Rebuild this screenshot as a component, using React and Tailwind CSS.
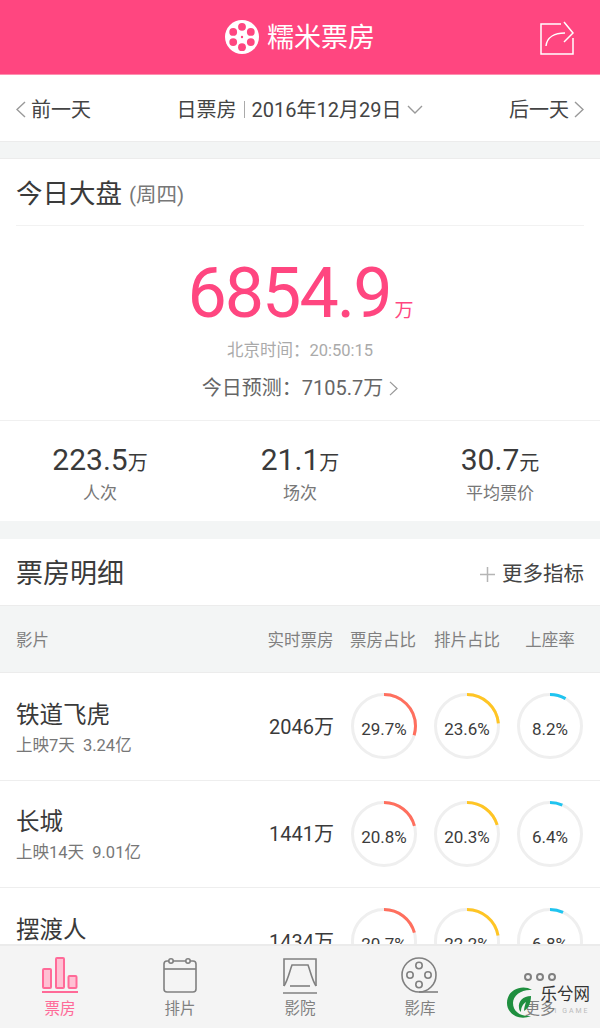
const FONT = "[font-family:Roboto,'Noto_Sans_CJK_SC',sans-serif]";

const movies = [
  { name: "铁道飞虎", sub: "上映7天  3.24亿", total: "2046万", rates: [29.7, 23.6, 8.2] },
  { name: "长城", sub: "上映14天  9.01亿", total: "1441万", rates: [20.8, 20.3, 6.4] },
  { name: "摆渡人", sub: "", total: "1434万", rates: [20.7, 22.2, 6.8] },
];

const ringColors = ["#ff6f5e", "#ffc524", "#1fc4f0"];

const Ring = ({ value, color }) => {
  const r = 31.5;
  const c = 2 * Math.PI * r;
  return (
    <div className="relative w-[66px] h-[66px] shrink-0">
      <svg width="66" height="66" viewBox="0 0 66 66" className="-rotate-90">
        <circle cx="33" cy="33" r={r} fill="none" stroke="#efefef" strokeWidth="3" />
        <circle
          cx="33"
          cy="33"
          r={r}
          fill="none"
          stroke={color}
          strokeWidth="3"
          strokeDasharray={`${(c * value) / 100} ${c}`}
        />
      </svg>
      <div className="absolute inset-0 flex items-center justify-center pt-[7px] text-[17px] text-[#3c3c3c]">
        {value}%
      </div>
    </div>
  );
};

const Chevron = ({ dir = "right", size = 10, height = 17, color = "#999" }) => (
  <svg width={size} height={height} viewBox="0 0 10 17" fill="none" stroke={color} strokeWidth="1.4">
    <path d={dir === "right" ? "M1 1l8 7.5L1 16" : "M9 1L1 8.5 9 16"} />
  </svg>
);

const Stat = ({ value, unit, label }) => (
  <div className="flex flex-col items-center">
    <div className="flex items-baseline text-[#3a3a3a] leading-none">
      <span className="text-[30px]">{value}</span>
      <span className="text-[20px]">{unit}</span>
    </div>
    <div className="mt-[10px] text-[17px] leading-none text-[#777]">{label}</div>
  </div>
);

const Reel = ({ className, hole = "#ff4680" }) => (
  <svg viewBox="0 0 34 34" className={className}>
    <circle cx="17" cy="17" r="17" fill="#fff" />
    <circle cx="17" cy="6.8" r="3.9" fill={hole} />
    <circle cx="17" cy="27.2" r="3.9" fill={hole} />
    <circle cx="8.2" cy="11.9" r="3.9" fill={hole} />
    <circle cx="25.8" cy="11.9" r="3.9" fill={hole} />
    <circle cx="8.2" cy="22.1" r="3.9" fill={hole} />
    <circle cx="25.8" cy="22.1" r="3.9" fill={hole} />
    <circle cx="17" cy="17" r="1.2" fill={hole} />
  </svg>
);

const tabs = [
  {
    label: "票房",
    active: true,
    icon: (
      <svg width="38" height="38" viewBox="0 0 38 38" fill="#ffc0d3" stroke="#ff6a98" strokeWidth="2">
        <rect x="2" y="13" width="8" height="19" rx="1" />
        <rect x="15" y="2" width="8" height="30" rx="1" />
        <rect x="27.5" y="20" width="8" height="12" rx="1" />
        <path d="M1 36h36" fill="none" />
      </svg>
    ),
  },
  {
    label: "排片",
    icon: (
      <svg width="36" height="38" viewBox="0 0 36 38" fill="none" stroke="#808080" strokeWidth="1.6">
        <rect x="2" y="5" width="32" height="31" rx="3" />
        <path d="M2 13h32" />
        <circle cx="9" cy="5" r="2.2" fill="#f4f4f4" />
        <circle cx="26" cy="5" r="2.2" fill="#f4f4f4" />
      </svg>
    ),
  },
  {
    label: "影院",
    icon: (
      <svg width="36" height="38" viewBox="0 0 36 38" fill="none" stroke="#808080" strokeWidth="1.6">
        <path d="M2 30V3h32v27" />
        <path d="M2 30C6 24 8 14 10 9h16c2 5 4 15 8 21" />
        <path d="M8 30h20" />
        <path d="M1 37h34" />
      </svg>
    ),
  },
  {
    label: "影库",
    icon: (
      <svg width="38" height="38" viewBox="0 0 38 38" fill="none" stroke="#808080" strokeWidth="1.6">
        <circle cx="18" cy="19" r="17" />
        <circle cx="18" cy="9.5" r="3.2" />
        <circle cx="18" cy="28.5" r="3.2" />
        <circle cx="9" cy="19" r="3.2" />
        <circle cx="27" cy="19" r="3.2" />
        <path d="M18 36h19" />
      </svg>
    ),
  },
  {
    label: "更多",
    icon: (
      <svg width="34" height="38" viewBox="0 0 34 38" fill="none" stroke="#808080" strokeWidth="2">
        <circle cx="5" cy="21" r="3" />
        <circle cx="17" cy="21" r="3" />
        <circle cx="29" cy="21" r="3" />
      </svg>
    ),
  },
];

const App = () => {
  return (
    <div className={`relative flex flex-col w-[600px] h-[1028px] overflow-hidden bg-[#f3f5f5] ${FONT}`}>
      {/* Header */}
      <header className="relative shrink-0 h-[75px] flex items-center justify-center bg-[#ff4680] border-b border-[#ff8fb0]">
        <Reel className="w-[34px] h-[34px] mr-[8px]" />
        <span className="pt-[3px] text-[27px] text-white">糯米票房</span>
        <svg width="36" height="36" viewBox="0 0 36 36" fill="none" stroke="#fff" strokeWidth="1.5" className="absolute right-[25px] top-[19px]">
          <path d="M22 5H2v30h32V19" />
          <path d="M7 27c1-9 9-13 19-13" />
          <path d="M25 3l9 11-9 9" />
        </svg>
      </header>

      <div className="flex-1 min-h-0 overflow-hidden">
        {/* Date bar */}
        <div className="flex items-center justify-between h-[67px] pt-[3px] px-[16px] bg-white border-b border-[#ececec] text-[20px] text-[#444]">
          <div className="flex items-center gap-[5px]">
            <Chevron dir="left" />
            <span>前一天</span>
          </div>
          <div className="flex items-center">
            <span>日票房</span>
            <span className="mx-[7px] w-px h-[17px] bg-[#aaa]" />
            <span>2016年12月29日</span>
            <svg width="16" height="10" viewBox="0 0 16 10" fill="none" stroke="#999" strokeWidth="1.4" className="ml-[6px]">
              <path d="M1 1l7 7 7-7" />
            </svg>
          </div>
          <div className="flex items-center gap-[5px]">
            <span>后一天</span>
            <Chevron />
          </div>
        </div>

        {/* Today overview */}
        <section className="mt-[16px] bg-white border-t border-[#ececec]">
          <div className="mx-[16px] h-[67px] pt-[3px] flex items-center border-b border-[#f2f2f2]">
            <span className="text-[26.5px] text-[#3a3a3a]">今日大盘</span>
            <span className="ml-[7px] mt-[3px] text-[20.5px] text-[#777]">(周四)</span>
          </div>
          <div className="flex flex-col items-center h-[195px] border-b border-[#f0f0f0]">
            <div className="flex items-baseline mt-[29px] ml-[1px] text-[#ff4680] leading-none">
              <span className="text-[70px] leading-[76px] tracking-[-2px]">6854.9</span>
              <span className="text-[19px] ml-[4px]">万</span>
            </div>
            <div className="mt-[10px] text-[16.5px] leading-[20px] text-[#aaa]">北京时间：20:50:15</div>
            <div className="flex items-center gap-[6px] mt-[15px] text-[20px] leading-[24px] text-[#666]">
              <span>今日预测：7105.7万</span>
              <Chevron size={9} height={15} />
            </div>
          </div>
          <div className="grid grid-cols-3 h-[100px] pt-[24px]">
            <Stat value="223.5" unit="万" label="人次" />
            <Stat value="21.1" unit="万" label="场次" />
            <Stat value="30.7" unit="元" label="平均票价" />
          </div>
        </section>

        {/* Box office table */}
        <section className="mt-[18px] bg-white">
          <div className="flex items-center justify-between h-[66px] pt-[4px] px-[16px]">
            <span className="text-[27px] text-[#3a3a3a]">票房明细</span>
            <div className="flex items-center gap-[7px] text-[20.5px] text-[#444]">
              <svg width="15" height="15" viewBox="0 0 15 15" stroke="#b5b5b5" strokeWidth="1.5">
                <path d="M7.5 0v15M0 7.5h15" />
              </svg>
              <span>更多指标</span>
            </div>
          </div>
          <div className="flex items-center h-[68px] pt-[5px] pl-[16px] bg-[#f3f5f5] border-y border-[#ececec] text-[16.5px] text-[#808080]">
            <span className="flex-1">影片</span>
            <span className="w-[67px] text-center">实时票房</span>
            <span className="w-[66px] ml-[16px] text-center">票房占比</span>
            <span className="w-[66px] ml-[18px] text-center">排片占比</span>
            <span className="w-[66px] ml-[17px] mr-[17px] text-center">上座率</span>
          </div>
          {movies.map((m) => (
            <div key={m.name} className="flex items-center h-[107.5px] pl-[16px] pr-[17px] border-b border-[#eeeeee]">
              <div className="flex-1 min-w-0 pt-[4px]">
                <div className="text-[23.5px] leading-[30px] text-[#3a3a3a]">{m.name}</div>
                <div className="mt-[5px] h-[22px] text-[16.5px] leading-[22px] whitespace-pre text-[#777]">{m.sub}</div>
              </div>
              <span className="pt-[1px] text-[20px] text-[#3a3a3a] mr-[17px]">{m.total}</span>
              <div className="flex gap-[17px]">
                {m.rates.map((rate, i) => (
                  <Ring key={i} value={rate} color={ringColors[i]} />
                ))}
              </div>
            </div>
          ))}
        </section>
      </div>

      {/* Bottom tabs */}
      <nav className="shrink-0 h-[84px] grid grid-cols-5 bg-[#f4f4f4] border-t-2 border-[#ebebeb] relative z-10">
        {tabs.map((t) => (
          <div key={t.label} className="flex flex-col items-center pt-[10px]">
            <div className="h-[38px] flex items-center">{t.icon}</div>
            <span className={`mt-[5px] text-[15.5px] leading-[20px] ${t.active ? "text-[#ff6a98]" : "text-[#808080]"}`}>
              {t.label}
            </span>
          </div>
        ))}
      </nav>

      {/* Watermark */}
      <div className="absolute right-[10px] bottom-[8px] z-20 flex items-start">
        <svg width="30" height="34" viewBox="0 0 30 34" fill="none" className="mr-[6px]">
          <path d="M27 4C18-2 2 3 2 17c0 11 12 18 24 13C15 31 8 25 8 17 8 9 17 3 27 4z" fill="#1f8f3f" />
          <path d="M26 10c-8 0-13 5-12 12 0 2 1 3 2 4 0-5 2-8 5-10-1 3-2 6-2 9 5-3 7-9 7-15z" fill="#1f8f3f" />
        </svg>
        <div className="flex flex-col items-start -mt-[1px]">
          <span className="text-[16.5px] leading-[20px] text-[#333]">乐兮网</span>
          <span className="mt-[2px] ml-[14px] text-[7px] leading-[9px] tracking-[2px] text-[#bbb]">I GAME</span>
        </div>
      </div>
    </div>
  );
};

export default App;
